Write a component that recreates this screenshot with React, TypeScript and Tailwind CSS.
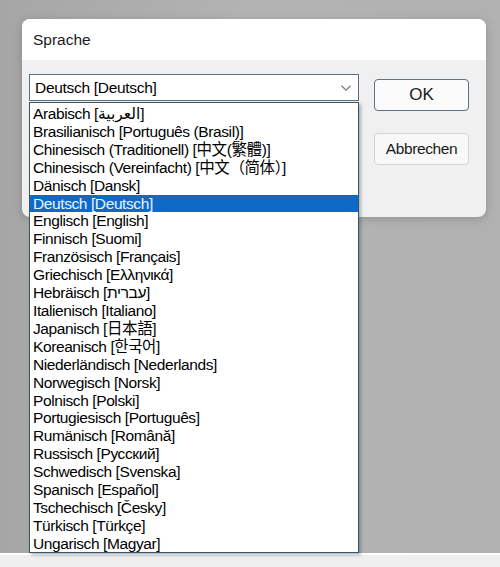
import React from 'react';

const languages = [
  'Arabisch [العربية]',
  'Brasilianisch [Português (Brasil)]',
  'Chinesisch (Traditionell) [中文(繁體)]',
  'Chinesisch (Vereinfacht) [中文（简体）]',
  'Dänisch [Dansk]',
  'Deutsch [Deutsch]',
  'Englisch [English]',
  'Finnisch [Suomi]',
  'Französisch [Français]',
  'Griechisch [Ελληνικά]',
  'Hebräisch [עברית]',
  'Italienisch [Italiano]',
  'Japanisch [日本語]',
  'Koreanisch [한국어]',
  'Niederländisch [Nederlands]',
  'Norwegisch [Norsk]',
  'Polnisch [Polski]',
  'Portugiesisch [Português]',
  'Rumänisch [Română]',
  'Russisch [Русский]',
  'Schwedisch [Svenska]',
  'Spanisch [Español]',
  'Tschechisch [Česky]',
  'Türkisch [Türkçe]',
  'Ungarisch [Magyar]',
];

const font = { fontFamily: '"Liberation Sans", "Noto Sans CJK SC", "DejaVu Sans", sans-serif' };

export default function App() {
  const selected = 'Deutsch [Deutsch]';
  return (
    <div
      className="relative w-[500px] h-[567px] overflow-hidden bg-gradient-to-r from-[#a6a6a6] via-[#b3b3b3] to-[#b1b1b1] flex flex-col text-black"
      style={font}
    >
      <div className="pt-[19px] pl-[22px]">
        <div className="w-[464px] h-[198px] rounded-[8px] bg-[#f0f0f0] overflow-hidden shadow-[0_2px_10px_rgba(0,0,0,0.18)]">
          <div className="h-[41px] bg-white flex items-center pl-[11px] text-[15.5px] text-[#1a1a1a]">Sprache</div>
          <div className="flex pt-[14px] pl-[7px]">
            <div className="w-[330px] h-[27px] border border-[#5b6f80] bg-white flex items-center justify-between pl-[5px] pr-[6px] text-[15.5px] tracking-[-0.3px]">
              <span>Deutsch [Deutsch]</span>
              <svg width="12" height="8" viewBox="0 0 12 8" fill="none">
                <path d="M1.5 1.8 6 6.2 10.5 1.8" stroke="#7a7a7a" strokeWidth="1.2" />
              </svg>
            </div>
            <div className="ml-[15px] flex flex-col">
              <button className="mt-[5px] w-[95px] h-[32px] rounded-[4px] border-[1.5px] border-[#5d7282] bg-[#fbfbfb] text-[17px] text-[#1a1a1a]">OK</button>
              <button className="mt-[22px] w-[95px] h-[32px] rounded-[4px] border border-[#d3d3d3] bg-[#f8f8f8] text-[15.5px] tracking-[-0.4px] text-[#1a1a1a]">Abbrechen</button>
            </div>
          </div>
        </div>
      </div>

      <div className="flex-1" />
      <div className="h-[14px] bg-[#efefef] border-t-2 border-white" />

      <div className="absolute left-[29px] top-[102px] w-[330px] h-[451px] bg-white border border-[#3f5262] shadow-[2px_2px_3px_rgba(40,60,80,0.35)] pt-[2px] text-[15.5px] tracking-[-0.4px] leading-[17.9px]">
        {languages.map(l => (
          <div
            key={l}
            className={l === selected ? 'bg-[#0e6ac8] text-[#eaf4ff] pl-[3px]' : 'pl-[3px]'}
          >
            {l}
          </div>
        ))}
      </div>
    </div>
  );
}
